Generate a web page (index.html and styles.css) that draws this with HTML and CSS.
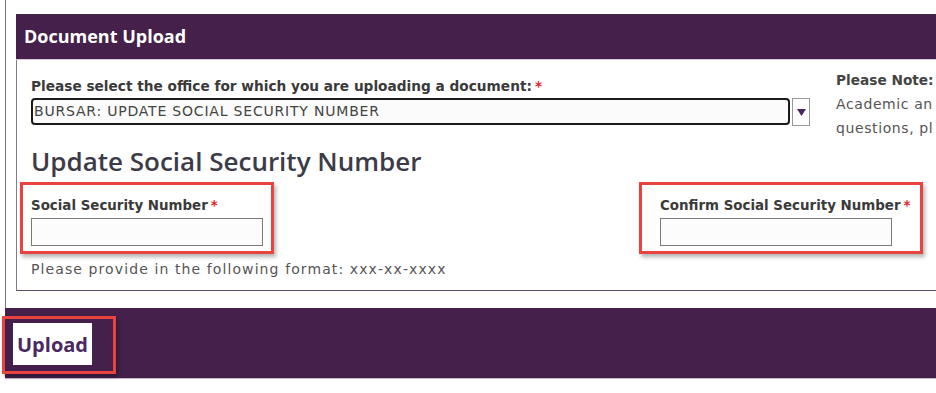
FILE: index.html
```html
<!DOCTYPE html>
<html>
<head>
<meta charset="utf-8">
<link rel="stylesheet" href="styles.css">
</head>
<body>
<div class="wrap">
  <section class="panel">
    <h2 class="panel-title">Document Upload</h2>
    <div class="panel-body">
      <div class="top-row">
        <div class="office">
          <div class="label">Please select the office for which you are uploading a document:<span class="req">*</span></div>
          <div class="select-row">
            <div class="select">BURSAR: UPDATE SOCIAL SECURITY NUMBER</div>
            <div class="arrow"><svg width="9" height="7" viewBox="0 0 9 7"><path d="M0 0H9L4.5 7Z" fill="#4a2660"/></svg></div>
          </div>
        </div>
        <aside class="note">
          <div class="note-title">Please Note:</div>
          <div class="note-text">Academic an</div>
          <div class="note-text">questions, pl</div>
        </aside>
      </div>
      <h3 class="section-title">Update Social Security Number</h3>
      <div class="fields">
        <div class="field hl field-left">
          <div class="label">Social Security Number<span class="req">*</span></div>
          <div class="input"></div>
        </div>
        <div class="field hl field-right">
          <div class="label">Confirm Social Security Number<span class="req">*</span></div>
          <div class="input"></div>
        </div>
      </div>
      <p class="hint">Please provide in the following format: xxx-xx-xxxx</p>
    </div>
  </section>
</div>
<div class="footer">
  <div class="hl btn-hl"><button class="upload">Upload</button></div>
</div>
</body>
</html>
```

FILE: styles.css
```css
html, body {
  margin: 0;
  padding: 0;
  background: #fff;
  width: 936px;
  height: 393px;
  overflow: hidden;
  font-family: "DejaVu Sans", "Liberation Sans", sans-serif;
  color: #3a3a3a;
}

.wrap {
  margin-left: 5px;
  border-left: 1px solid #7e6e86;
  padding: 14px 0 17px 10px;
}

.panel-title {
  margin: 0;
  box-sizing: border-box;
  height: 46px;
  background: #44204a;
  color: #fff;
  font-family: "Open Sans", "Liberation Sans", sans-serif;
  font-size: 18px;
  font-weight: 700;
  line-height: 45px;
  padding-left: 8px;
  border-bottom: 1px solid #d8cbdc;
}

.panel-body {
  border-left: 1px solid #8a7890;
  border-bottom: 1px solid #5e4a66;
  padding: 16px 0 11px 14px;
  width: 1000px;
}

.top-row {
  display: flex;
  gap: 26px;
}

.office {
  width: 779px;
}

.label {
  font-size: 13.7px;
  font-weight: 700;
  line-height: 20px;
  color: #3a3a3a;
  white-space: nowrap;
}

.field .label {
  font-size: 13.4px;
}

.req {
  color: #e0242a;
  margin-left: 3px;
}

.select-row {
  display: flex;
  gap: 2px;
  margin-top: 2px;
}

.select {
  flex: 1;
  height: 27px;
  box-sizing: border-box;
  border: 2px solid #1a1a1a;
  border-radius: 4px;
  background: #fbfbfb;
  font-size: 14px;
  letter-spacing: 0.8px;
  line-height: 22px;
  padding-left: 1px;
  color: #444;
}

.arrow {
  width: 18px;
  height: 28px;
  box-sizing: border-box;
  border: 1px solid #9a9a9a;
  background: #fff;
  display: flex;
  align-items: center;
  justify-content: center;
}

.note {
  font-size: 14px;
  letter-spacing: 0.6px;
  line-height: 24px;
  color: #555;
  white-space: nowrap;
  margin-top: -8px;
}

.note-title {
  font-weight: 700;
  font-size: 13.7px;
  letter-spacing: 0;
  color: #444;
}

.section-title {
  margin: 6px 0 6px;
  font-family: "Open Sans", "Liberation Sans", sans-serif;
  font-size: 26px;
  font-weight: 600;
  line-height: 30px;
  color: #3c3c48;
}

.fields {
  display: flex;
  margin-left: -11px;
}

.hl {
  border: 3px solid #e8433f;
  box-shadow: 2px 3px 4px rgba(0, 0, 0, 0.3);
}

.field {
  box-sizing: border-box;
  padding: 11px 0 5px 8px;
}

.field-left {
  width: 254px;
}

.field-right {
  width: 284px;
  margin-left: 365px;
  padding-left: 18px;
}

.input {
  width: 232px;
  height: 28px;
  box-sizing: border-box;
  border: 1px solid #7a7a7a;
  background: #fcfcfc;
  margin-top: 2px;
}

.hint {
  margin: 5px 0 0;
  font-size: 14px;
  letter-spacing: 1.1px;
  line-height: 20px;
  color: #555;
}

.footer {
  margin-left: 5px;
  height: 71px;
  background: #44204a;
  border-bottom: 1px solid #c8b8cc;
  padding-top: 8px;
  box-sizing: border-box;
}

.btn-hl {
  display: inline-block;
  margin-left: -3px;
  padding: 4px 21px 6px 8px;
}

.upload {
  display: block;
  width: 79px;
  height: 42px;
  border: 0;
  background: #fff;
  font-family: "Open Sans", "Liberation Sans", sans-serif;
  font-size: 20px;
  font-weight: 700;
  color: #4a2862;
  padding: 0 0 0 4px;
  text-align: left;
}
```
